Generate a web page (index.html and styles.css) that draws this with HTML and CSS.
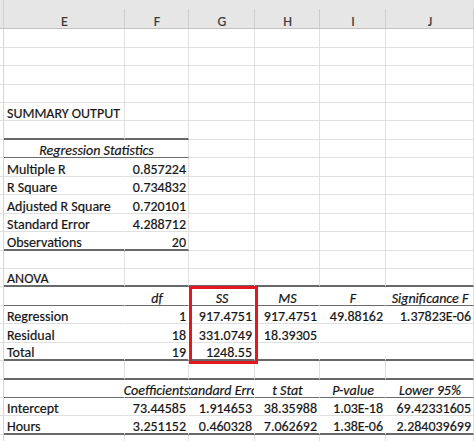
FILE: index.html
```html
<!DOCTYPE html>
<html>
<head>
<meta charset="utf-8">
<link rel="stylesheet" href="styles.css">
</head>
<body>
<div class="sheet">
  <div class="colhead">
    <div class="ch gut"></div>
    <div class="ch">E</div>
    <div class="ch">F</div>
    <div class="ch">G</div>
    <div class="ch">H</div>
    <div class="ch">I</div>
    <div class="ch">J</div>
  </div>

  <div class="grid">
    <!-- rows 1-4 -->
    <div class="row"><div class="c gut"></div><div class="c"></div><div class="c"></div><div class="c"></div><div class="c"></div><div class="c"></div><div class="c"></div></div>
    <div class="row"><div class="c gut"></div><div class="c"></div><div class="c"></div><div class="c"></div><div class="c"></div><div class="c"></div><div class="c"></div></div>
    <div class="row"><div class="c gut"></div><div class="c"></div><div class="c"></div><div class="c"></div><div class="c"></div><div class="c"></div><div class="c"></div></div>
    <div class="row"><div class="c gut"></div><div class="c"></div><div class="c"></div><div class="c"></div><div class="c"></div><div class="c"></div><div class="c"></div></div>
    <!-- row 5 -->
    <div class="row"><div class="c gut"></div><div class="c over">SUMMARY OUTPUT</div><div class="c"></div><div class="c"></div><div class="c"></div><div class="c"></div><div class="c"></div></div>
    <!-- row 6 -->
    <div class="row"><div class="c gut"></div><div class="c b2"></div><div class="c b2"></div><div class="c"></div><div class="c"></div><div class="c"></div><div class="c"></div></div>
    <!-- row 7 -->
    <div class="row"><div class="c gut"></div><div class="c span2 ctr it b1">Regression Statistics</div><div class="c"></div><div class="c"></div><div class="c"></div><div class="c"></div></div>
    <!-- rows 8-12 -->
    <div class="row"><div class="c gut"></div><div class="c nv">Multiple R</div><div class="c r">0.857224</div><div class="c"></div><div class="c"></div><div class="c"></div><div class="c"></div></div>
    <div class="row"><div class="c gut"></div><div class="c nv">R Square</div><div class="c r">0.734832</div><div class="c"></div><div class="c"></div><div class="c"></div><div class="c"></div></div>
    <div class="row"><div class="c gut"></div><div class="c nv">Adjusted R Square</div><div class="c r">0.720101</div><div class="c"></div><div class="c"></div><div class="c"></div><div class="c"></div></div>
    <div class="row"><div class="c gut"></div><div class="c nv">Standard Error</div><div class="c r">4.288712</div><div class="c"></div><div class="c"></div><div class="c"></div><div class="c"></div></div>
    <div class="row"><div class="c gut"></div><div class="c nv b2">Observations</div><div class="c r b2">20</div><div class="c"></div><div class="c"></div><div class="c"></div><div class="c"></div></div>
    <!-- row 13 -->
    <div class="row"><div class="c gut"></div><div class="c"></div><div class="c"></div><div class="c"></div><div class="c"></div><div class="c"></div><div class="c"></div></div>
    <!-- row 14 -->
    <div class="row"><div class="c gut"></div><div class="c b2">ANOVA</div><div class="c b2"></div><div class="c b2"></div><div class="c b2"></div><div class="c b2"></div><div class="c b2"></div></div>
    <!-- row 15 -->
    <div class="row"><div class="c gut"></div><div class="c nv b1"></div><div class="c nv b1 ctr it">df</div><div class="c nv b1 ctr it">SS</div><div class="c nv b1 ctr it">MS</div><div class="c nv b1 ctr it">F</div><div class="c b1 ctr it">Significance F</div></div>
    <!-- rows 16-18 -->
    <div class="row"><div class="c gut"></div><div class="c nv">Regression</div><div class="c nv r">1</div><div class="c nv r">917.4751</div><div class="c nv r">917.4751</div><div class="c nv r">49.88162</div><div class="c r">1.37823E-06</div></div>
    <div class="row"><div class="c gut"></div><div class="c nv">Residual</div><div class="c nv r">18</div><div class="c nv r">331.0749</div><div class="c nv r">18.39305</div><div class="c nv"></div><div class="c"></div></div>
    <div class="row"><div class="c gut"></div><div class="c nv b2">Total</div><div class="c nv r b2">19</div><div class="c nv r b2">1248.55</div><div class="c nv b2"></div><div class="c nv b2"></div><div class="c b2"></div></div>
    <!-- row 19 -->
    <div class="row"><div class="c gut"></div><div class="c b2"></div><div class="c b2"></div><div class="c b2"></div><div class="c b2"></div><div class="c b2"></div><div class="c b2"></div></div>
    <!-- row 20 -->
    <div class="row"><div class="c gut"></div><div class="c nv b1"></div><div class="c nv b1 ctr it spill">Coefficients</div><div class="c nv b1 ctr it clip">Standard Error</div><div class="c nv b1 ctr it">t Stat</div><div class="c nv b1 ctr it">P-value</div><div class="c b1 ctr it">Lower 95%</div></div>
    <!-- rows 21-22 -->
    <div class="row"><div class="c gut"></div><div class="c nv">Intercept</div><div class="c nv r">73.44585</div><div class="c nv r">1.914653</div><div class="c nv r">38.35988</div><div class="c nv r">1.03E-18</div><div class="c r">69.42331605</div></div>
    <div class="row"><div class="c gut"></div><div class="c nv b2">Hours</div><div class="c nv r b2">3.251152</div><div class="c nv r b2">0.460328</div><div class="c nv r b2">7.062692</div><div class="c nv r b2">1.38E-06</div><div class="c r b2">2.284039699</div></div>
    <!-- row 23 -->
    <div class="row"><div class="c gut"></div><div class="c"></div><div class="c"></div><div class="c"></div><div class="c"></div><div class="c"></div><div class="c"></div></div>
  </div>

  <div class="highlight"></div>
</div>
</body>
</html>
```
FILE: styles.css
```css
html, body {
  margin: 0;
  padding: 0;
  background: #ffffff;
}

.sheet {
  position: relative;
  width: 474px;
  height: 441px;
  overflow: hidden;
  font-family: "Carlito", "Calibri", "Liberation Sans", sans-serif;
  font-size: 14px;
  color: #151515;
  -webkit-text-stroke: 0.2px currentColor;
}

.colhead {
  display: grid;
  grid-template-columns: 4px 121px 64px 66px 65px 66px 88px;
  height: 28.3px;
  background: #e6e6e6;
  border-bottom: 1px solid #c2c2c2;
}

.ch {
  display: flex;
  align-items: flex-end;
  justify-content: center;
  line-height: 13px;
  color: #3a3a3a;
  background: linear-gradient(#cdcdcd, #cdcdcd) right 9px / 1px calc(100% - 9px) no-repeat;
}

.ch.gut {
  background: linear-gradient(#d2d2d2, #d2d2d2) right 0 / 1px 100% no-repeat;
}

.row {
  display: grid;
  grid-template-columns: 4px 121px 64px 66px 65px 66px 88px;
  height: 18.45px;
}

.c {
  box-sizing: border-box;
  display: flex;
  align-items: flex-end;
  min-width: 0;
  padding: 0 2px 0 3px;
  line-height: 13px;
  white-space: nowrap;
  overflow: hidden;
  border-right: 1px solid #e0e0e0;
  border-bottom: 1px solid #e0e0e0;
}

.c.gut {
  padding: 0;
  border-right-color: #d6d6d6;
}

.c.over {
  overflow: visible;
}

.c.nv {
  border-right-color: transparent;
}

.c.r {
  justify-content: flex-end;
}

.c.ctr {
  justify-content: center;
}

.c.it {
  font-style: italic;
}

.c.span2 {
  grid-column: span 2;
}

.c.b2 {
  border-bottom: 2px solid #686868;
}

.c.b1 {
  border-bottom: 1px solid #6c6c6c;
}

.c.spill {
  overflow: visible;
  padding: 0;
  clip-path: inset(-2px 0 -2px -30px);
}

.c.clip {
  padding: 0;
}

.highlight {
  position: absolute;
  left: 189px;
  top: 286px;
  width: 69px;
  height: 78px;
  box-sizing: border-box;
  border: 3px solid #e3171f;
}
```
